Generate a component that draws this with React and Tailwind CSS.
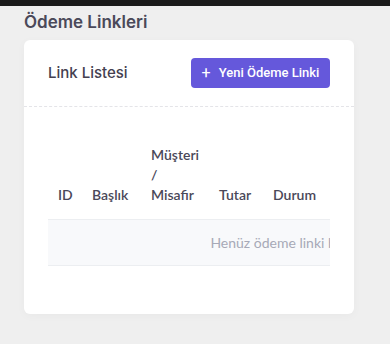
import React from 'react';

const columns = [
    { label: 'ID', w: 'w-[34px]' },
    { label: 'Başlık', w: 'w-[59px]' },
    { label: 'Müşteri / Misafir', w: 'w-[68px]' },
    { label: 'Tutar', w: 'w-[54px]' },
    { label: 'Durum', w: 'w-[67px]' },
    { label: 'Bağlantı', w: 'w-[90px]' },
    { label: 'Oluşturulma', w: 'w-[90px]' },
    { label: 'İşlemler', w: 'w-[90px]' },
];

const App = () => {
    return (
        <div className="min-h-[344px] bg-[#efefef] font-['Inter',sans-serif] text-[#444050]">
            <div className="h-[6px] bg-[#1b1b1b]"></div>

            <div className="pl-6 pr-9">
                <h4 className="pt-[4px] text-[17px] font-semibold leading-6 text-[#4a4959]">Ödeme Linkleri</h4>

                <div className="mt-[6px] rounded-md bg-white shadow-[0_2px_10px_rgba(0,0,0,0.03)] overflow-hidden">
                    {/* Header */}
                    <div className="flex items-center justify-between px-6 py-[18px] border-b border-dashed border-[#e4e4e8]">
                        <h5 className="text-[15px] font-medium text-[#444050]">Link Listesi</h5>
                        <button className="flex h-[30px] w-[139px] items-center justify-center gap-[8px] rounded bg-[#6558db] font-['Roboto',sans-serif] text-[13px] font-medium text-white">
                            <span className="text-[16px] leading-none font-normal">+</span>
                            Yeni Ödeme Linki
                        </button>
                    </div>

                    {/* Table */}
                    <div className="px-6 pt-6 pb-12">
                        <div className="overflow-hidden">
                            <table className="w-[552px] table-fixed border-collapse font-['Lato',sans-serif] text-[14px]">
                                <thead>
                                    <tr>
                                        {columns.map(c => (
                                            <th key={c.label} className={`${c.w} px-[10px] py-[14px] text-left align-bottom font-semibold leading-5 text-[#4a4859]`}>
                                                {c.label}
                                            </th>
                                        ))}
                                    </tr>
                                </thead>
                                <tbody>
                                    <tr className="bg-[#f8f9fb] border-y border-[#eceef1]">
                                        <td colSpan={columns.length} className="h-[46px] px-[10px] text-center text-[#a7a9b7]">
                                            Henüz ödeme linki bulunmamaktadır.
                                        </td>
                                    </tr>
                                </tbody>
                            </table>
                        </div>
                    </div>
                </div>
            </div>
        </div>
    );
};

export default App;
